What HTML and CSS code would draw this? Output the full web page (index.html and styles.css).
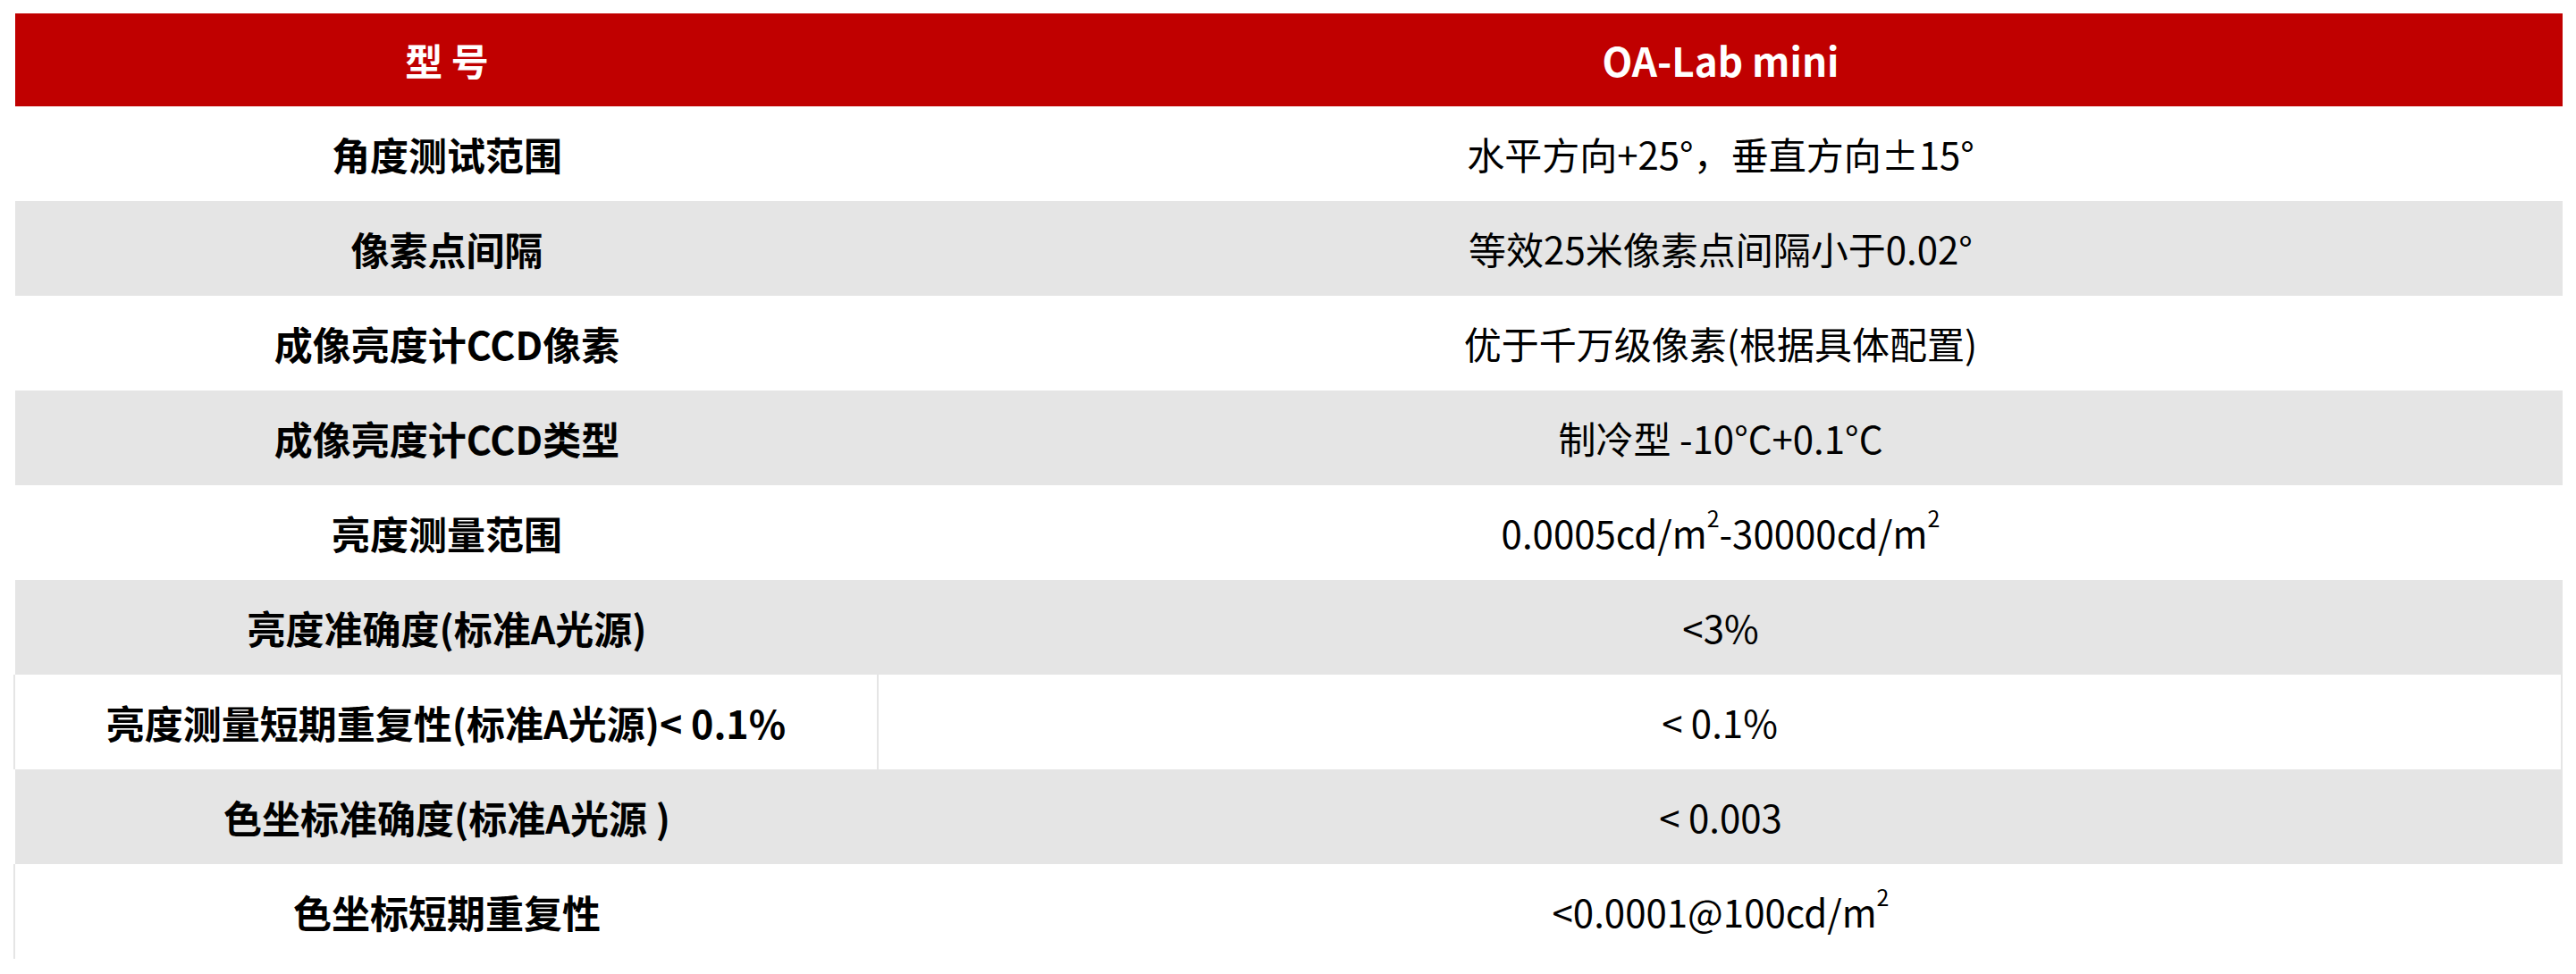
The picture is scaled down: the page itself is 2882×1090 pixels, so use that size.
FILE: index.html
```html
<!DOCTYPE html>
<html lang="zh-CN">
<head>
<meta charset="utf-8">
<title>OA-Lab mini</title>
<link rel="stylesheet" href="styles.css">
</head>
<body>
<div class="spec">
  <div class="row head">
    <div class="cell key">型 号</div>
    <div class="cell val">OA-Lab mini</div>
  </div>
  <div class="row">
    <div class="cell key">角度测试范围</div>
    <div class="cell val">水平方向+25°，垂直方向±15°</div>
  </div>
  <div class="row grey">
    <div class="cell key">像素点间隔</div>
    <div class="cell val">等效25米像素点间隔小于0.02°</div>
  </div>
  <div class="row">
    <div class="cell key">成像亮度计CCD像素</div>
    <div class="cell val">优于千万级像素(根据具体配置)</div>
  </div>
  <div class="row grey">
    <div class="cell key">成像亮度计CCD类型</div>
    <div class="cell val">制冷型 -10°C+0.1°C</div>
  </div>
  <div class="row">
    <div class="cell key">亮度测量范围</div>
    <div class="cell val"><span>0.0005cd/m<sup class="pow">2</sup>-30000cd/m<sup class="pow">2</sup></span></div>
  </div>
  <div class="row grey">
    <div class="cell key">亮度准确度(标准A光源)</div>
    <div class="cell val">&lt;3%</div>
  </div>
  <div class="row boxed">
    <div class="cell key">亮度测量短期重复性(标准A光源)&lt; 0.1%</div>
    <div class="cell val">&lt; 0.1%</div>
  </div>
  <div class="row grey">
    <div class="cell key">色坐标准确度(标准A光源 )</div>
    <div class="cell val">&lt; 0.003</div>
  </div>
  <div class="row last">
    <div class="cell key">色坐标短期重复性</div>
    <div class="cell val"><span>&lt;0.0001@100cd/m<sup class="pow">2</sup></span></div>
  </div>
</div>
</body>
</html>
```

FILE: styles.css
```css
html, body {
  margin: 0;
  padding: 0;
  background: #ffffff;
}

body {
  font-family: "Noto Sans CJK SC", "Noto Sans", sans-serif;
  color: #000000;
}

.spec {
  width: 2850px;
  margin: 15px 0 0 17px;
}

.row {
  display: grid;
  grid-template-columns: 966px 1fr;
  height: 106px;
}

.row.head {
  height: 104px;
  background: #c00000;
  color: #ffffff;
}

.row.grey {
  background: #e5e5e5;
}

.cell {
  display: flex;
  align-items: center;
  justify-content: center;
  font-size: 42px;
  line-height: 1;
  white-space: nowrap;
  box-sizing: border-box;
}

.cell.key {
  font-size: 43px;
  font-weight: 700;
}

.cell.val {
  font-weight: 400;
}

.head .cell {
  font-weight: 700;
}

.head .cell.key {
  font-size: 42px;
}

.head .cell.val {
  font-size: 44px;
}

.boxed .key {
  border-right: 2px solid #e5e5e5;
  box-shadow: -2px 0 0 #e5e5e5;
}

.boxed .val {
  border-right: 2px solid #e5e5e5;
}

.last .key {
  box-shadow: -2px 0 0 #e5e5e5, 0 2px 0 #e5e5e5, -2px 2px 0 #e5e5e5;
}

.pow {
  font-size: 25px;
  line-height: 0;
  vertical-align: baseline;
  position: relative;
  top: -24px;
}
```
